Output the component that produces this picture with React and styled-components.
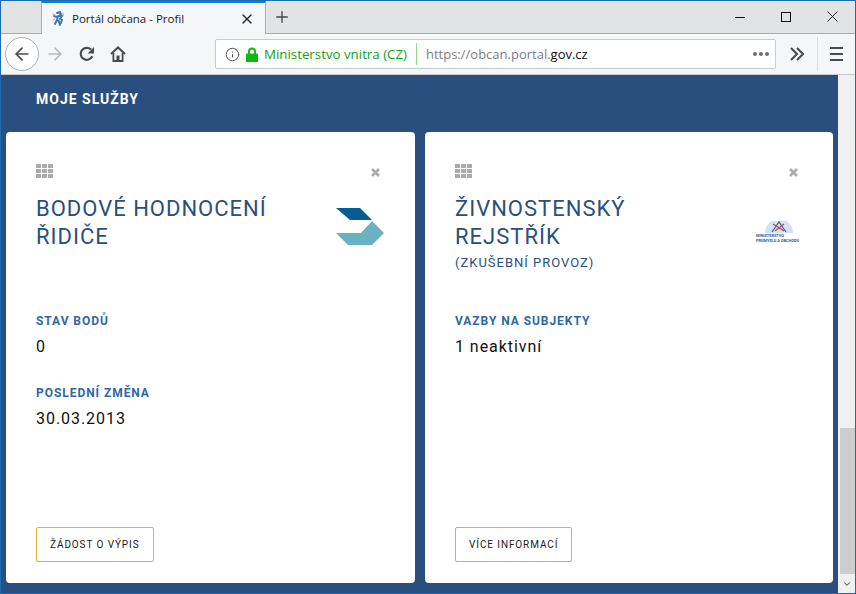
import React from "react";
import styled, { createGlobalStyle } from "styled-components";
import { Info, X, Plus, ArrowLeft, ArrowRight, ChevronDown } from "lucide-react";

const Global = createGlobalStyle`
  html, body { margin: 0; padding: 0; overflow: hidden; }
  body { font-family: "Roboto", "Liberation Sans", sans-serif; }
  * { box-sizing: border-box; }
`;

const Win = styled.div`
  width: 856px;
  height: 594px;
  border: 1px solid #1a6db5;
  display: flex;
  flex-direction: column;
  overflow: hidden;
  background: #2a4f7e;
`;

const TabStrip = styled.div`
  height: 33px;
  flex: none;
  display: flex;
  align-items: stretch;
  background: #e2e3e5;
  border-bottom: 1px solid #a9aaac;
`;

const TabGap = styled.div`
  width: 40px;
`;

const Tab = styled.div`
  width: 225px;
  height: 33px;
  background: #f5f6f8;
  border-top: 2px solid #0a84e0;
  border-left: 1px solid #b0b1b3;
  border-right: 1px solid #b0b1b3;
  display: flex;
  align-items: center;
  padding: 0 10px;
  font-family: "Open Sans", "Noto Sans", sans-serif;
  font-size: 11.5px;
  color: #1b1b1d;
`;

const TabTitle = styled.span`
  flex: 1;
  margin-left: 7px;
`;

const NewTab = styled.div`
  width: 32px;
  display: flex;
  align-items: center;
  justify-content: center;
  color: #47474a;
`;

const WinButtons = styled.div`
  margin-left: auto;
  display: flex;
  align-items: center;
  padding-bottom: 1px;
`;

const WinButton = styled.div`
  width: 46px;
  height: 30px;
  display: flex;
  align-items: center;
  justify-content: center;
  color: #111;
`;

const Toolbar = styled.div`
  height: 41px;
  flex: none;
  display: flex;
  align-items: center;
  background: #f5f6f8;
  border-bottom: 1px solid #c8c9cb;
  padding-left: 4px;
`;

const BackButton = styled.div`
  width: 34px;
  height: 34px;
  border-radius: 50%;
  border: 1px solid #b1b1b3;
  background: #fff;
  display: flex;
  align-items: center;
  justify-content: center;
  color: #4a4a4f;
`;

const NavButton = styled.div`
  width: ${(p) => p.$w || 31}px;
  height: 32px;
  display: flex;
  align-items: center;
  justify-content: center;
  color: ${(p) => (p.$off ? "#b9b9bb" : "#4a4a4f")};
`;

const UrlBar = styled.div`
  width: 561px;
  height: 30px;
  margin-left: 82px;
  background: #fff;
  border: 1px solid #c9cacc;
  border-radius: 2px;
  display: flex;
  align-items: center;
  padding-left: 9px;
  font-family: "Open Sans", "Noto Sans", sans-serif;
  font-size: 13px;
  white-space: nowrap;
`;

const LockSlot = styled.span`
  display: flex;
  margin-left: 6px;
`;

const Identity = styled.span`
  color: #12a112;
  margin-left: 6px;
  font-size: 13.3px;
`;

const UrlSep = styled.div`
  width: 1px;
  height: 22px;
  background: #8fd88f;
  margin: 0 9px 0 9px;
`;

const UrlDim = styled.span`
  color: #7d7d82;
`;

const UrlDark = styled.span`
  color: #111;
`;

const Dots = styled.span`
  margin-left: auto;
  margin-right: 6px;
  display: flex;
  gap: 2px;
`;

const Dot = styled.i`
  width: 4px;
  height: 4px;
  border-radius: 50%;
  background: #6e6e72;
`;

const ToolSep = styled.div`
  width: 1px;
  height: 34px;
  background: #dadbdd;
`;

const Body = styled.div`
  flex: 1;
  display: flex;
  min-height: 0;
`;

const Page = styled.div`
  flex: 1;
  min-width: 0;
  background: #2a4f7e;
  padding: 0 4px 10px 5px;
  display: flex;
  flex-direction: column;
`;

const Heading = styled.div`
  height: 57px;
  padding: 16px 0 0 30px;
  color: #fff;
  font-size: 14px;
  font-weight: 700;
  line-height: 16px;
  letter-spacing: 1px;
`;

const Cards = styled.div`
  flex: 1;
  display: grid;
  grid-template-columns: 409px 408px;
  gap: 10px;
`;

const Card = styled.div`
  background: #fff;
  border-radius: 4px;
  padding: 30px 34px 20px 30px;
  display: flex;
  flex-direction: column;
`;

const CardTop = styled.div`
  display: flex;
  justify-content: space-between;
  align-items: center;
  height: 18px;
`;

const Close = styled.div`
  display: flex;
  margin: 3px 1px 0 0;
`;

const TitleRow = styled.div`
  display: flex;
  justify-content: space-between;
  height: 114px;
  margin-top: 15px;
`;

const Title = styled.h2`
  margin: 0;
  color: #2a4f7e;
  font-size: 22px;
  line-height: 28px;
  font-weight: 400;
  letter-spacing: 1px;
  max-width: ${(p) => p.$max}px;
`;

const Subtitle = styled.div`
  color: #2a4f7e;
  font-size: 13px;
  line-height: 16px;
  letter-spacing: 1px;
  margin-top: 4px;
`;

const Logo = styled.div`
  display: flex;
  flex-direction: column;
  align-items: center;
  padding-top: ${(p) => p.$top}px;
  margin-right: ${(p) => p.$right}px;
`;

const MpoText = styled.span`
  font-size: 3.9px;
  line-height: 5px;
  font-weight: 700;
  color: #2a5a95;
  width: 46px;
  white-space: nowrap;
`;

const Label = styled.div`
  color: #2f68a5;
  font-size: 12px;
  line-height: 14px;
  font-weight: 700;
  letter-spacing: 0.95px;
  margin-top: 5px;
`;

const Value = styled.div`
  color: #111;
  font-size: 16px;
  line-height: 20px;
  letter-spacing: 0.95px;
  margin: 9px 0 24px;
`;

const Action = styled.div`
  margin-top: auto;
  margin-bottom: 1px;
  align-self: flex-start;
  height: 35px;
  padding: 0 13px;
  border: 1px solid #e9ac2e;
  border-radius: 2px;
  display: flex;
  align-items: center;
  color: #1a1a1a;
  font-size: 10px;
  font-weight: 400;
  letter-spacing: 0.9px;
`;

const Scrollbar = styled.div`
  width: 17px;
  flex: none;
  background: #f0f0f0;
  display: flex;
  flex-direction: column;
  justify-content: flex-end;
  align-items: flex-end;
`;

const Thumb = styled.div`
  width: 15px;
  height: 146px;
  background: #cdcdcd;
`;

const ScrollArrow = styled.div`
  width: 100%;
  height: 19px;
  display: flex;
  align-items: center;
  justify-content: center;
  color: #606060;
`;

const Grip = () => (
  <svg width="17" height="14" viewBox="0 0 17 14" fill="#ababab">
    {[0, 5, 10].map((y) =>
      [0, 6, 12].map((x) => <rect key={`${x}-${y}`} x={x} y={y} width="5" height="4" />)
    )}
  </svg>
);

const CloseIcon = () => (
  <svg width="9" height="9" viewBox="0 0 9 9" stroke="#ababab" strokeWidth="2.6">
    <path d="M1 1 L8 8 M8 1 L1 8" />
  </svg>
);

const Favicon = () => (
  <svg width="13" height="15" viewBox="0 0 13 15" fill="none" strokeLinecap="round">
    <path d="M5 2 L8 1 L9 3 L7 5 L10 5 L8 8 L10 9 L9 12 L7 11 L8 14 M6 5 L5 9 L3 13 M5 6 L2 5 M5 9 L7 10" stroke="#3f78b5" strokeWidth="1.9" />
    <path d="M1 3 L3 4 M1 9 L3 8 M11 2 L11 4" stroke="#9dbcdb" strokeWidth="1.2" />
  </svg>
);

const ChevronLogo = () => (
  <svg width="48" height="37" viewBox="0 0 48 37">
    <path d="M0 0 H24 L36 12 H14 Z" fill="#055e92" />
    <path d="M36 13 L48 25 L36 37 H12 L0 25 H25 Z" fill="#68b2c1" />
  </svg>
);

const MpoMark = () => (
  <svg width="34" height="12" viewBox="0 0 34 12">
    <path d="M3 12 A14 14 0 0 1 31 12 Z" fill="#cfe3f1" />
    <path d="M10 11 L17 1 L24 11" stroke="#3c5f8c" strokeWidth="1.2" fill="none" />
    <path d="M11 3 L22 10 M22 3 L13 10" stroke="#c4454c" strokeWidth="1.2" />
  </svg>
);

const ReloadIcon = () => (
  <svg width="16" height="16" viewBox="0 0 16 16" fill="none">
    <path d="M13.2 10.2 A6 6 0 1 1 12 3.6" stroke="currentColor" strokeWidth="2.2" />
    <path d="M15 1 V7.4 H8.6 Z" fill="currentColor" />
  </svg>
);

const HomeIcon = () => (
  <svg width="16" height="16" viewBox="0 0 16 16" fill="none">
    <path d="M1 8 L8 1.4 L15 8" stroke="currentColor" strokeWidth="2" />
    <path d="M3.4 7 V15 H12.6 V7" stroke="currentColor" strokeWidth="1.8" />
    <rect x="6.5" y="9.5" width="3" height="5.5" fill="currentColor" />
  </svg>
);

const LockIcon = () => (
  <svg width="12" height="15" viewBox="0 0 12 15" fill="none">
    <path d="M3 7 V4.5 A3 3 0 0 1 9 4.5 V7" stroke="#12b812" strokeWidth="2" />
    <rect x="0" y="6.5" width="12" height="8.5" rx="0.5" fill="#12b812" />
  </svg>
);

const DoubleChevron = () => (
  <svg width="14" height="14" viewBox="0 0 14 14" fill="none" stroke="currentColor" strokeWidth="2.1">
    <path d="M1 1 L7 7 L1 13 M7 1 L13 7 L7 13" />
  </svg>
);

const BurgerIcon = () => (
  <svg width="13" height="14" viewBox="0 0 13 14" fill="currentColor">
    <rect y="0" width="13" height="2" />
    <rect y="6" width="13" height="2" />
    <rect y="12" width="13" height="2" />
  </svg>
);

const MinIcon = () => (
  <svg width="10" height="10" viewBox="0 0 10 10" stroke="currentColor">
    <path d="M0 5.5 H10" />
  </svg>
);

const MaxIcon = () => (
  <svg width="10" height="10" viewBox="0 0 10 10" fill="none" stroke="currentColor">
    <rect x="0.5" y="0.5" width="9" height="9" />
  </svg>
);

const ShutIcon = () => (
  <svg width="11" height="11" viewBox="0 0 11 11" stroke="currentColor" strokeWidth="0.9">
    <path d="M0.5 0.5 L10.5 10.5 M10.5 0.5 L0.5 10.5" />
  </svg>
);

export default function App() {
  return (
    <Win>
      <Global />
      <TabStrip>
        <TabGap />
        <Tab>
          <Favicon />
          <TabTitle>Portál občana - Profil</TabTitle>
          <X size={16} strokeWidth={2} color="#2b2b2e" />
        </Tab>
        <NewTab>
          <Plus size={18} strokeWidth={1.8} />
        </NewTab>
        <WinButtons>
          <WinButton>
            <MinIcon />
          </WinButton>
          <WinButton>
            <MaxIcon />
          </WinButton>
          <WinButton>
            <ShutIcon />
          </WinButton>
        </WinButtons>
      </TabStrip>
      <Toolbar>
        <BackButton>
          <ArrowLeft size={20} strokeWidth={2} />
        </BackButton>
        <NavButton $off $w={32}>
          <ArrowRight size={20} strokeWidth={2} />
        </NavButton>
        <NavButton>
          <ReloadIcon />
        </NavButton>
        <NavButton>
          <HomeIcon />
        </NavButton>
        <UrlBar>
          <Info size={15} strokeWidth={1.6} color="#555" />
          <LockSlot>
            <LockIcon />
          </LockSlot>
          <Identity>Ministerstvo vnitra (CZ)</Identity>
          <UrlSep />
          <UrlDim>https://obcan.portal.</UrlDim>
          <UrlDark>gov.cz</UrlDark>
          <Dots>
            <Dot />
            <Dot />
            <Dot />
          </Dots>
        </UrlBar>
        <NavButton $w={41}>
          <DoubleChevron />
        </NavButton>
        <ToolSep />
        <NavButton $w={37}>
          <BurgerIcon />
        </NavButton>
      </Toolbar>
      <Body>
        <Page>
          <Heading>MOJE SLUŽBY</Heading>
          <Cards>
            <Card>
              <CardTop>
                <Grip />
                <Close>
                  <CloseIcon />
                </Close>
              </CardTop>
              <TitleRow>
                <Title $max={290}>BODOVÉ HODNOCENÍ ŘIDIČE</Title>
                <Logo $top={13} $right={-3}>
                  <ChevronLogo />
                </Logo>
              </TitleRow>
              <Label>STAV BODŮ</Label>
              <Value>0</Value>
              <Label>POSLEDNÍ ZMĚNA</Label>
              <Value>30.03.2013</Value>
              <Action>ŽÁDOST O VÝPIS</Action>
            </Card>
            <Card>
              <CardTop>
                <Grip />
                <Close>
                  <CloseIcon />
                </Close>
              </CardTop>
              <TitleRow>
                <div>
                  <Title $max={200}>ŽIVNOSTENSKÝ REJSTŘÍK</Title>
                  <Subtitle>(ZKUŠEBNÍ PROVOZ)</Subtitle>
                </div>
                <Logo $top={26} $right={-3}>
                  <MpoMark />
                  <MpoText>MINISTERSTVO</MpoText>
                  <MpoText>PRŮMYSLU A OBCHODU</MpoText>
                </Logo>
              </TitleRow>
              <Label>VAZBY NA SUBJEKTY</Label>
              <Value>1 neaktivní</Value>
              <Action>VÍCE INFORMACÍ</Action>
            </Card>
          </Cards>
        </Page>
        <Scrollbar>
          <Thumb />
          <ScrollArrow>
            <ChevronDown size={10} strokeWidth={2.5} />
          </ScrollArrow>
        </Scrollbar>
      </Body>
    </Win>
  );
}
